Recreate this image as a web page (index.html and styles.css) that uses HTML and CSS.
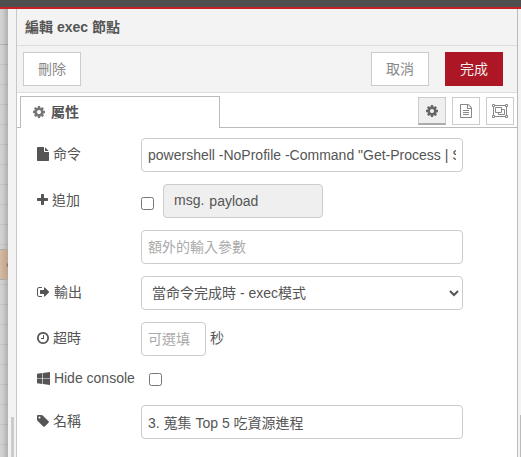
FILE: index.html
```html
<!DOCTYPE html>
<html lang="zh-Hant">
<head>
<meta charset="utf-8">
<title>編輯 exec 節點</title>
<link rel="stylesheet" href="styles.css">
</head>
<body>
<svg class="symbols" aria-hidden="true">
  <symbol id="cog" viewBox="128 0 1536 1792"><path d="M1152 896q0-106-75-181t-181-75-181 75-75 181 75 181 181 75 181-75 75-181zm512-109v222q0 12-8 23t-20 13l-185 28q-19 54-39 91 35 50 107 138 10 12 10 25t-9 23q-27 37-99 108t-94 71q-12 0-26-9l-138-108q-44 23-91 38-16 136-29 186-7 28-36 28h-222q-14 0-24.500-8.500t-11.500-21.500l-28-184q-49-16-90-37l-141 107q-10 9-25 9-14 0-25-11-126-114-165-168-7-10-7-23 0-12 8-23 15-21 51-66.500t54-70.500q-27-50-41-99l-183-27q-13-2-21-12.500t-8-23.500v-222q0-12 8-23t19-13l186-28q14-46 39-92-40-57-107-138-10-12-10-24 0-10 9-23 26-36 98.500-107.500t94.500-71.500q13 0 26 10l138 107q44-23 91-38 16-136 29-186 7-28 36-28h222q14 0 24.500 8.500t11.500 21.500l28 184q49 16 90 37l142-107q9-9 24-9 13 0 25 10 129 119 165 170 7 8 7 22 0 12-8 23-15 21-51 66.500t-54 70.500q26 50 41 98l183 28q13 2 21 12.500t8 23.500z"/></symbol>
</svg>
<div class="app">
  <header class="topbar"></header>
  <main class="workspace">
    <div class="canvas"><div class="node"></div></div>
    <div class="separator"><div class="thumb"></div></div>
    <section class="tray">
      <h1 class="tray-title">編輯 exec 節點</h1>
      <div class="toolbar">
        <button class="btn" type="button">刪除</button>
        <div class="toolbar-end">
          <button class="btn" type="button">取消</button>
          <button class="btn primary" type="button">完成</button>
        </div>
      </div>
      <nav class="tabs">
        <button class="tab" type="button"><svg class="icon w12"><use href="#cog"/></svg>屬性</button>
        <div class="tab-tools">
          <button class="tool active" type="button" aria-label="屬性"><svg class="icon w12"><use href="#cog"/></svg></button>
          <button class="tool" type="button" aria-label="描述"><svg class="icon w12" viewBox="128 0 1536 1792"><path d="M1596 380q28 28 48 76t20 88v1152q0 40-28 68t-68 28h-1344q-40 0-68-28t-28-68v-1600q0-40 28-68t68-28h896q40 0 88 20t76 48zm-444-244v376h376q-10-29-22-41l-313-313q-12-12-41-22zm384 1528v-1024h-416q-40 0-68-28t-28-68v-416h-768v1536h1280zM512 800q0-14 9-23t23-9h704q14 0 23 9t9 23v64q0 14-9 23t-23 9h-704q-14 0-23-9t-9-23zM512 1056q0-14 9-23t23-9h704q14 0 23 9t9 23v64q0 14-9 23t-23 9h-704q-14 0-23-9t-9-23zM512 1312q0-14 9-23t23-9h704q14 0 23 9t9 23v64q0 14-9 23t-23 9h-704q-14 0-23-9t-9-23z"/></svg></button>
          <button class="tool" type="button" aria-label="外觀"><svg class="icon w16" viewBox="0 0 16 14"><g fill="none" stroke="currentColor"><path d="M3 1.500H13M3 12.500H13M1.500 3V11M14.500 3V11M.5.5h2v2h-2zM13.500.5h2v2h-2zM.5 11.500h2v2h-2zM13.500 11.500h2v2h-2zM3.500 3.500h6v5h-6zM9.500 5.500h3v5h-6v-2"/></g></svg></button>
        </div>
      </nav>
      <form class="form">
        <div class="row">
          <label class="label" for="command"><svg class="icon w12" viewBox="128 0 1536 1792"><path d="M1152 512v-472q22 14 36 28l408 408q14 14 28 36h-472zm-128 32q0 40 28 68t68 28h544v1056q0 40-28 68t-68 28h-1344q-40 0-68-28t-28-68v-1600q0-40 28-68t68-28h800v544z"/></svg> 命令</label>
          <input class="field" id="command" type="text" value="powershell -NoProfile -Command &quot;Get-Process | Sort-Object CPU&quot;">
        </div>
        <div class="row">
          <label class="label" for="append"><svg class="icon w11" viewBox="192 0 1408 1792"><path d="M1600 736v192q0 40-28 68t-68 28h-416v416q0 40-28 68t-68 28h-192q-40 0-68-28t-28-68v-416h-416q-40 0-68-28t-28-68v-192q0-40 28-68t68-28h416v-416q0-40 28-68t68-28h192q40 0 68 28t28 68v416h416q40 0 68 28t28 68z"/></svg> 追加</label>
          <input class="check low" id="append" type="checkbox">
          <div class="typed"><span class="prefix">msg.</span><input class="typed-value" type="text" value="payload" aria-label="msg."></div>
        </div>
        <div class="row">
          <span class="label"></span>
          <input class="field" type="text" placeholder="額外的輸入參數" aria-label="額外的輸入參數">
        </div>
        <div class="row">
          <label class="label" for="output"><svg class="icon w13" viewBox="64 0 1664 1792"><path d="M704 1440q0 4 1 20t.5 26.500-3 23.500-10 19.500-20.500 6.500h-320q-119 0-203.500-84.500t-84.500-203.500v-704q0-119 84.500-203.500t203.500-84.500h320q13 0 22.500 9.500t9.500 22.500q0 4 1 20t.5 26.500-3 23.500-10 19.500-20.500 6.500h-320q-66 0-113 47t-47 113v704q0 66 47 113t113 47h312l11.500 1 11.500 3 8 5.500 7 9 2 13.500zm928-544q0 26-19 45l-544 544q-19 19-45 19t-45-19-19-45v-288h-448q-26 0-45-19t-19-45v-384q0-26 19-45t45-19h448v-288q0-26 19-45t45-19 45 19l544 544q19 19 19 45z"/></svg> 輸出</label>
          <select class="field" id="output"><option>當命令完成時 - exec模式</option></select>
        </div>
        <div class="row">
          <label class="label" for="timeout"><svg class="icon w12" viewBox="128 0 1536 1792"><path d="M1024 544v448q0 14-9 23t-23 9h-320q-14 0-23-9t-9-23v-64q0-14 9-23t23-9h224v-352q0-14 9-23t23-9h64q14 0 23 9t9 23zm416 352q0-148-73-273t-198-198-273-73-273 73-198 198-73 273 73 273 198 198 273 73 273-73 198-198 73-273zm224 0q0 209-103 385.500t-279.500 279.500-385.500 103-385.500-103-279.500-279.500-103-385.500 103-385.500 279.500-279.500 385.500-103 385.500 103 279.500 279.500 103 385.500z"/></svg> 超時</label>
          <input class="field short" id="timeout" type="text" placeholder="可選填"><span class="unit">秒</span>
        </div>
        <div class="row compact">
          <label class="label" for="hide"><svg class="icon w13" viewBox="64 0 1664 1792"><path d="M746 1006v651l-682-94v-557zM746 263v659h-682v-565zM1728 1006v786l-907-125v-661zM1728 128v794h-907v-669z"/></svg> Hide console</label>
          <input class="check low inset" id="hide" type="checkbox">
        </div>
        <div class="row">
          <label class="label" for="name"><svg class="icon w12" viewBox="128 0 1536 1792"><path d="M576 448q0-53-37.500-90.500t-90.500-37.500-90.500 37.500-37.500 90.500 37.500 90.500 90.500 37.500 90.500-37.500 37.500-90.500zm1067 576q0 53-37 90l-491 492q-39 37-91 37-53 0-90-37l-715-716q-38-37-64.500-101t-26.500-117v-416q0-52 38-90t90-38h416q53 0 117 26.500t102 64.500l715 714q37 39 37 91z"/></svg> 名稱</label>
          <input class="field" id="name" type="text" value="3. 蒐集 Top 5 吃資源進程">
        </div>
      </form>
    </section>
    <div class="edge"><div class="edge-thumb"></div></div>
  </main>
</div>
</body>
</html>
```
FILE: styles.css
```css
* { box-sizing: border-box; }
body, button, input, select {
  font: 14px/20px "Liberation Sans", "Noto Sans CJK TC", sans-serif;
  color: #555;
}
body { margin: 0; background: #f3f3f3; }
.symbols { position: absolute; width: 0; height: 0; }
.app { display: flex; flex-direction: column; min-height: 100vh; }
.topbar { height: 9px; background: #4f4f4f; border-bottom: 2px solid #c7201f; }
.workspace { flex: 1; display: grid; grid-template-columns: 8px 9px 1fr 3px; }

.canvas {
  position: relative;
  background:
    linear-gradient(to right, transparent 2px, rgba(0, 0, 0, .16)),
    linear-gradient(#d1d1d1 35px, #b4b4b4 35px) 0 0 / 100% 36px no-repeat,
    repeating-linear-gradient(#d1d1d1 0 15px, #c5c5c5 15px 16px, #d1d1d1 16px 20px);
}
.node {
  position: absolute;
  top: 240px;
  left: 0;
  width: 8px;
  height: 31px;
  border: solid #aaa;
  border-width: 1px 0;
  background: radial-gradient(circle at 9px 15px, #79634f 1px, transparent 3px), linear-gradient(to right, #d6baa1, #bda38c);
}
.separator { display: flex; align-items: flex-end; padding-left: 3px; background: #f3f3f3; border-right: 1px solid #c8c8c8; }
.thumb { width: 3px; height: 40px; background: #ccc; }
.edge { display: flex; align-items: flex-end; justify-content: flex-end; background: #f3f3f3; }
.edge-thumb { width: 1px; height: 42px; background: #bbb; }

.tray { min-width: 0; background: #fff; border-right: 1px solid #bbb; }
.tray-title {
  margin: 0;
  padding: 8px;
  height: 37px;
  font-size: 14px;
  line-height: 20px;
  background: #f3f3f3;
  border-bottom: 1px solid #ddd;
}
.toolbar {
  display: flex;
  align-items: center;
  justify-content: space-between;
  height: 47px;
  padding: 0 14px 0 6px;
  background: #f3f3f3;
  border-bottom: 1px solid #ddd;
}
.toolbar-end { display: flex; gap: 16px; }
.btn { width: 58px; height: 34px; padding: 0; background: #fff; border: 1px solid #ccc; color: #888; }
.primary { background: #ad1625; border-color: #ad1625; color: #eee; }

.tabs {
  display: flex;
  justify-content: space-between;
  height: 35px;
  padding: 3px 3px 0;
  background: linear-gradient(#bbb, #bbb) bottom / 100% 1px no-repeat;
}
.tab {
  display: flex;
  align-items: center;
  gap: 6px;
  width: 200px;
  padding: 0 12px 2px;
  font-weight: bold;
  background: #fff;
  border: 1px solid #bbb;
  border-bottom: 0;
}
.tab .icon { color: #777; }
.tab-tools { display: flex; gap: 6px; padding-top: 1px; }
.tool {
  display: flex;
  align-items: center;
  justify-content: center;
  width: 28px;
  height: 28px;
  padding: 0;
  background: #fff;
  border: 1px solid #ccc;
  color: #888;
}
.tool.active { background: #efefef; border-bottom: 2px solid #aaa; color: #666; }

.icon { height: 14px; fill: currentColor; }
.w11 { width: 11px; }
.w12 { width: 12px; }
.w13 { width: 13px; }
.w16 { width: 16px; }

.form { display: flex; flex-direction: column; gap: 12px; padding: 10px 54px 18px 20px; }
.row { display: flex; align-items: center; height: 34px; }
.compact { height: 25px; align-items: flex-start; }
.label { flex: 0 0 104px; padding-bottom: 2px; white-space: nowrap; }
.label .icon { vertical-align: -2px; }
.field {
  flex: 1;
  min-width: 0;
  height: 34px;
  padding: 6px;
  background: #fff;
  border: 1px solid #ccc;
  border-radius: 4px;
}
.field::placeholder { color: #aaa; opacity: 1; }
.short { flex: 0 0 65px; }
.unit { margin-left: 4px; padding-bottom: 2px; }
.check { width: 13px; height: 13px; margin: 0; }
.low { margin-top: 5px; }
.inset { margin-left: 8px; }
.typed {
  display: flex;
  width: 160px;
  height: 34px;
  margin-left: 9px;
  padding-left: 10px;
  background: #efefef;
  border: 1px solid #ccc;
  border-radius: 4px;
}
.prefix { padding-top: 5px; }
.typed-value { flex: 1; min-width: 0; padding: 0 5px; background: none; border: 0; }
```
